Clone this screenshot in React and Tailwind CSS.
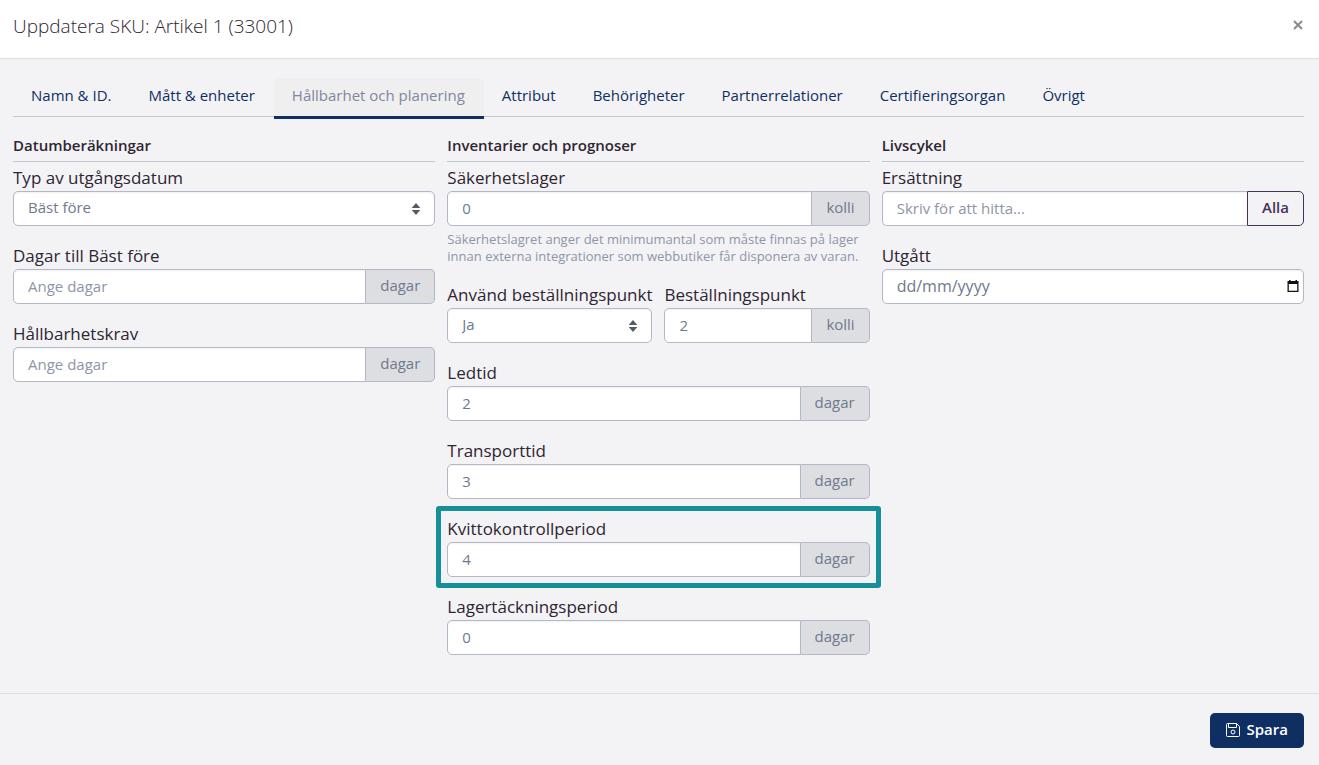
import { useState } from "react"

const TABS = [
    "Namn & ID.",
    "Mått & enheter",
    "Hållbarhet och planering",
    "Attribut",
    "Behörigheter",
    "Partnerrelationer",
    "Certifieringsorgan",
    "Övrigt",
]

const CONTROL = "h-[35px] w-full min-w-0 bg-white border border-[#b3b7c6] px-[14px] pb-0.5 text-[15px] text-[#70798c] placeholder:text-[#8e95a8] shadow-[inset_0_1px_2px_rgba(0,0,0,0.06)] outline-none focus:border-[#0f2f62]"

function Field({ id, label, help, children }) {
    return (
        <div className="min-w-0">
            <label htmlFor={id} className="mb-0.5 block whitespace-nowrap text-[17px] leading-[23px]">
                {label}
            </label>
            {children}
            {help && <p className="mt-[5px] text-[13px] leading-[17px] text-[#8e95a8]">{help}</p>}
        </div>
    )
}

function UnitField({ id, label, unit, value = "", placeholder, help }) {
    return (
        <Field id={id} label={label} help={help}>
            <div className="flex">
                <input id={id} type="text" inputMode="numeric" defaultValue={value} placeholder={placeholder} className={`${CONTROL} rounded-l-[5px]`} />
                <span className="flex h-[35px] shrink-0 items-center rounded-r-[5px] border border-l-0 border-[#b3b7c6] bg-[#dddee2] px-[14px] pb-0.5 text-[15px] text-[#70798c]">
                    {unit}
                </span>
            </div>
        </Field>
    )
}

function SelectField({ id, label, options }) {
    return (
        <Field id={id} label={label}>
            <div className="relative">
                <select id={id} className={`${CONTROL} appearance-none rounded-[5px]`}>
                    {options.map((option) => (
                        <option key={option}>{option}</option>
                    ))}
                </select>
                <svg className="pointer-events-none absolute right-[14px] top-3 h-3 w-[10px]" viewBox="0 0 10 12" fill="#535b6b" aria-hidden="true">
                    <path d="M5 0 9.3 5H.7zM.7 7h8.6L5 12z" />
                </svg>
            </div>
        </Field>
    )
}

function Section({ title, children }) {
    return (
        <section className="min-w-0">
            <h2 className="mb-1 border-b border-[#c5c7d0] pb-1 text-[15px] font-semibold leading-6">{title}</h2>
            <div className="flex flex-col gap-[18px]">{children}</div>
        </section>
    )
}

function SaveIcon() {
    return (
        <svg className="h-[14px] w-[14px]" viewBox="0 0 14 14" fill="none" stroke="currentColor" aria-hidden="true">
            <path d="M1.5.5h9l3 3v9a1 1 0 0 1-1 1h-11a1 1 0 0 1-1-1v-11a1 1 0 0 1 1-1z" />
            <path d="M2.5.5v4h8v-4" />
            <circle cx="7" cy="9" r="2" />
        </svg>
    )
}

function App() {
    const [activeTab, SetActiveTab] = useState(TABS[2])

    return (
        <div className="flex min-h-screen flex-col bg-[#f3f3f6] font-['Open_Sans','Noto_Sans',sans-serif] text-[#2f2533]">
            <header className="flex items-start justify-between border-b border-[#dddee2] bg-white pb-[18px] pl-[13px] pr-[15px] pt-3">
                <h1 className="text-[19px] font-light leading-7">Uppdatera SKU: Artikel 1 (33001)</h1>
                <button type="button" aria-label="Stäng" className="flex h-[26px] w-3 items-center justify-center text-[#8d8890]">
                    <svg className="h-[10px] w-[10px]" viewBox="0 0 10 10" stroke="currentColor" strokeWidth="2" aria-hidden="true">
                        <path d="M1 1l8 8M9 1 1 9" />
                    </svg>
                </button>
            </header>

            <main className="grow pb-9 pl-[13px] pr-[15px] pt-[19px]">
                <nav role="tablist" className="flex border-b border-[#c5c7d0]">
                    {TABS.map((tab) => (
                        <button
                            key={tab}
                            type="button"
                            role="tab"
                            aria-selected={tab === activeTab}
                            onClick={() => SetActiveTab(tab)}
                            className={
                                tab === activeTab
                                    ? "-mb-[3px] h-[41px] whitespace-nowrap rounded-t-[5px] border-b-[3px] border-[#0f2f62] bg-[#efefef] pb-1 pl-[18px] pr-[19px] text-[15px] text-[#8087a0]"
                                    : "h-[38px] whitespace-nowrap pb-1 pl-[18px] pr-[19px] text-[15px] text-[#0f2f62]"
                            }
                        >
                            {tab}
                        </button>
                    ))}
                </nav>

                <form id="skuForm" className="grid grid-cols-3 gap-3 pt-4" onSubmit={(e) => e.preventDefault()}>
                    <Section title="Datumberäkningar">
                        <SelectField id="dateType" label="Typ av utgångsdatum" options={["Bäst före", "Sista förbrukningsdag"]} />
                        <UnitField id="daysToBest" label="Dagar till Bäst före" unit="dagar" placeholder="Ange dagar" />
                        <UnitField id="shelfLife" label="Hållbarhetskrav" unit="dagar" placeholder="Ange dagar" />
                    </Section>

                    <Section title="Inventarier och prognoser">
                        <UnitField
                            id="safetyStock"
                            label="Säkerhetslager"
                            unit="kolli"
                            value="0"
                            help="Säkerhetslagret anger det minimumantal som måste finnas på lager innan externa integrationer som webbutiker får disponera av varan."
                        />
                        <div className="grid grid-cols-2 gap-3">
                            <SelectField id="useReorder" label="Använd beställningspunkt" options={["Ja", "Nej"]} />
                            <UnitField id="reorderPoint" label="Beställningspunkt" unit="kolli" value="2" />
                        </div>
                        <UnitField id="leadTime" label="Ledtid" unit="dagar" value="2" />
                        <UnitField id="transportTime" label="Transporttid" unit="dagar" value="3" />
                        {/* Highlighted field */}
                        <div className="-m-[11px] rounded-[3px] border-[5px] border-[#168f98] p-[6px]">
                            <UnitField id="receiptPeriod" label="Kvittokontrollperiod" unit="dagar" value="4" />
                        </div>
                        <UnitField id="coverPeriod" label="Lagertäckningsperiod" unit="dagar" value="0" />
                    </Section>

                    <Section title="Livscykel">
                        <Field id="replacement" label="Ersättning">
                            <div className="flex">
                                <input id="replacement" type="text" placeholder="Skriv för att hitta..." className={`${CONTROL} rounded-l-[5px] border-r-0`} />
                                <button type="button" className="h-[35px] shrink-0 rounded-r-[5px] border border-[#463259] px-[14px] pb-0.5 text-[15px] font-semibold text-[#463259]">
                                    Alla
                                </button>
                            </div>
                        </Field>
                        <Field id="expired" label="Utgått">
                            <div className="relative">
                                <input id="expired" type="text" placeholder="dd/mm/yyyy" className={`${CONTROL} rounded-[5px] placeholder:text-base placeholder:text-[#70798c]`} />
                                <button type="button" aria-label="Välj datum" className="absolute right-[5px] top-[11px] h-3 w-3">
                                    <svg className="h-3 w-3" viewBox="0 0 12 12" aria-hidden="true">
                                        <path d="M2 0h1.5v1h5V0H10v1h1.5v11H.5V1H2zM1.8 4v6.7h8.4V4z" fill="#111" fillRule="evenodd" />
                                    </svg>
                                </button>
                            </div>
                        </Field>
                    </Section>
                </form>
            </main>

            <footer className="flex justify-end border-t border-[#dddee2] pb-[17px] pr-[15px] pt-[19px]">
                <button type="submit" form="skuForm" className="flex h-[35px] items-center gap-[7px] rounded-[5px] bg-[#0f2f62] px-4 pb-0.5 text-[15px] font-semibold text-white">
                    <SaveIcon />
                    Spara
                </button>
            </footer>
        </div>
    )
}

export default App
